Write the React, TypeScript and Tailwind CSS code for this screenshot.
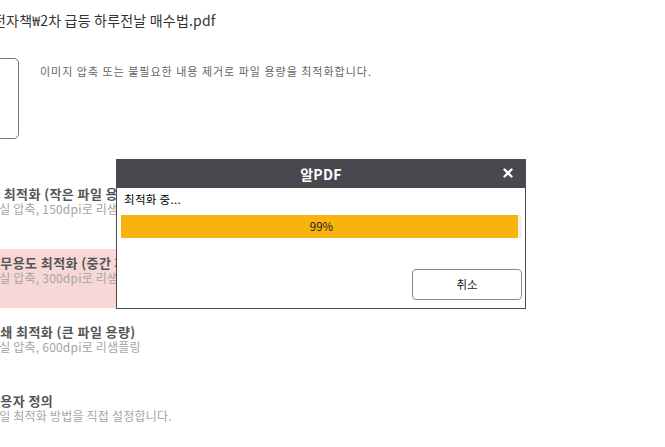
import React from 'react';
import { X } from 'lucide-react';

const options = [
  { title: '웹 최적화 (작은 파일 용량)', desc: '손실 압축, 150dpi로 리샘플링', active: false },
  { title: '사무용도 최적화 (중간 파일 용량)', desc: '손실 압축, 300dpi로 리샘플링', active: true },
  { title: '인쇄 최적화 (큰 파일 용량)', desc: '손실 압축, 600dpi로 리샘플링', active: false },
  { title: '사용자 정의', desc: '파일 최적화 방법을 직접 설정합니다.', active: false },
];

function ProgressDialog() {
  const progress = 99;
  return (
    <div className="absolute left-[116px] top-[159px] w-[410px] h-[150px] border border-[#4a4a4f] bg-white flex flex-col">
      <div className="relative h-[28px] bg-[#48484e] flex items-center justify-center">
        <span className="text-white text-[14px] font-bold leading-none tracking-[0.3px]">알PDF</span>
        <button className="absolute right-[10px] top-[6px] text-white">
          <X size={14} strokeWidth={4} />
        </button>
      </div>
      <div className="pl-[4px] pr-[3px] pt-[4px] flex flex-col flex-1">
        <div className="pl-[3px] text-[11.5px] leading-[15px] text-black tracking-[0.3px]">최적화 중...</div>
        <div className="mt-[8px] h-[23px] w-[401px] bg-[#f0f0f0]">
          <div
            className="h-full bg-[#f8b30f] flex items-center justify-center text-[11.5px] text-[#222]"
            style={{ width: `${progress}%` }}
          >
            <span className="pl-[4px]">{progress}%</span>
          </div>
        </div>
        <div className="flex justify-end mt-[31px]">
          <button className="w-[110px] h-[31px] rounded-[4px] border border-[#8a8a8a] text-[11.5px] text-[#222] bg-white">
            취소
          </button>
        </div>
      </div>
    </div>
  );
}

export default function App() {
  return (
    <div
      className="relative w-[665px] h-[447px] overflow-hidden bg-white"
      style={{ fontFamily: '"Noto Sans CJK KR", "Noto Sans", sans-serif' }}
    >
      <div className="ml-[-7px] pt-[9px] text-[14px] leading-[22px] text-[#333] tracking-[0.2px]">
        전자책₩2차 급등 하루전날 매수법.pdf
      </div>

      <div className="flex items-start mt-[27px]">
        <div className="ml-[-20px] w-[39px] h-[81px] border border-[#777] rounded-[5px]" />
        <p className="ml-[21px] mt-[6px] text-[11px] leading-[14px] text-[#666] tracking-[1px]">
          이미지 압축 또는 불필요한 내용 제거로 파일 용량을 최적화합니다.
        </p>
      </div>

      <div className="ml-[-12px] mt-[41px] flex flex-col gap-[10px] w-[480px]">
        {options.map((o) => (
          <div
            key={o.title}
            className={`h-[59px] pt-[6px] ${o.active ? 'bg-[#f8d7d7]' : ''}`}
          >
            <div className="text-[13px] font-bold leading-[16px] text-[#555] tracking-[0.4px]">{o.title}</div>
            <div className="text-[12px] leading-[14px] text-[#a5a5a5] tracking-[0.2px]">{o.desc}</div>
          </div>
        ))}
      </div>

      <ProgressDialog />
    </div>
  );
}
